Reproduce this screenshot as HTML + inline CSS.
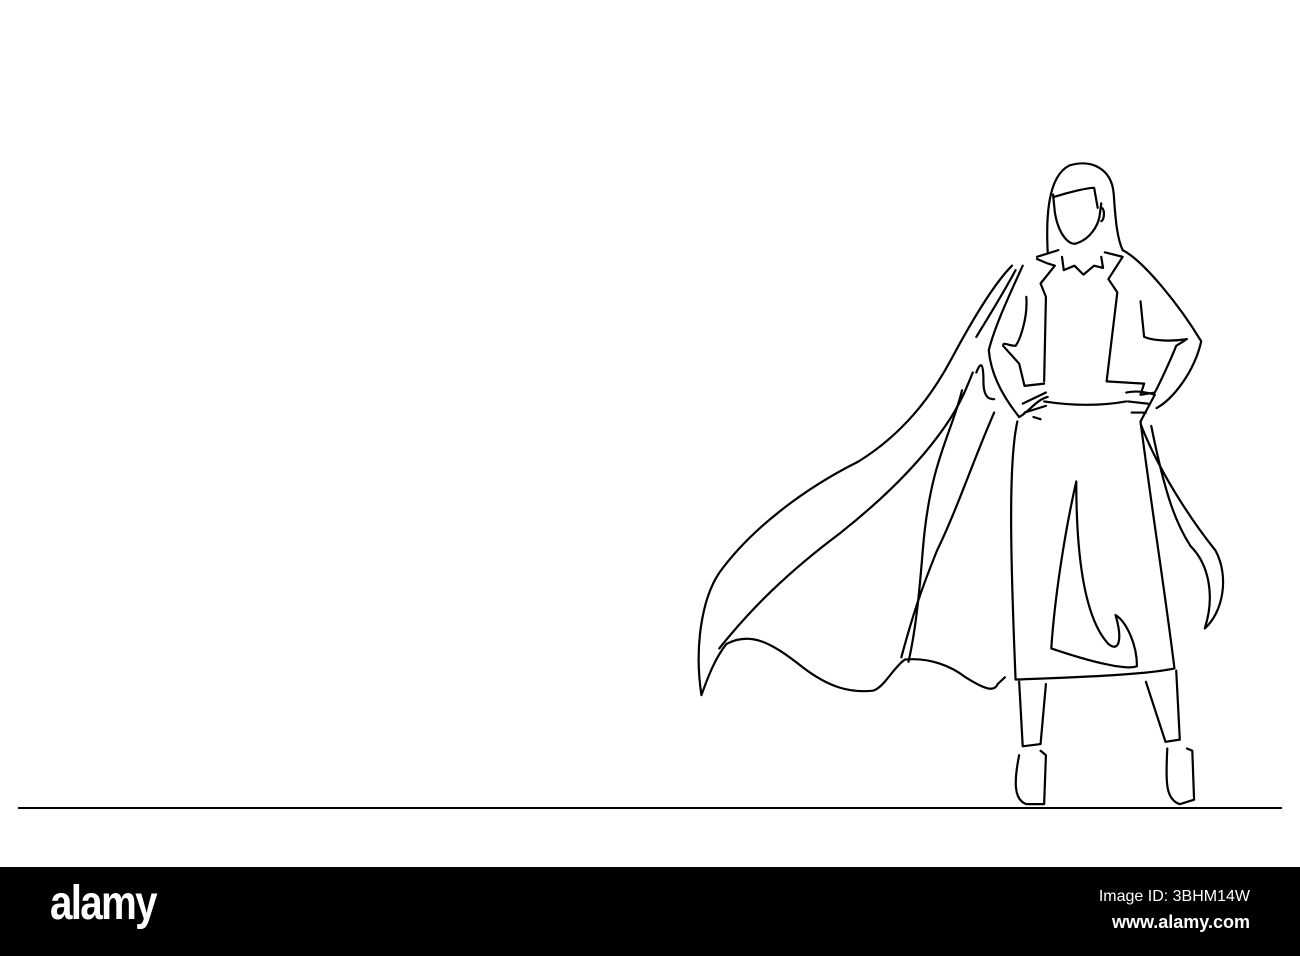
<!DOCTYPE html>
<html><head><style>
html,body{margin:0;padding:0;background:#fff;width:1300px;height:956px;overflow:hidden;position:relative;font-family:"Liberation Sans",sans-serif}
.band{position:absolute;left:0;top:867px;width:1300px;height:89px;background:#000}
.logo{position:absolute;left:50px;top:880px;line-height:48px;color:#fff;font-size:48px;font-weight:bold;letter-spacing:-2px;transform:scaleX(0.84);transform-origin:left top}
.id{position:absolute;right:50px;top:888px;line-height:18px;color:#fff;font-size:16px;white-space:nowrap}
.www{position:absolute;right:50px;top:912px;line-height:20px;color:#fff;font-size:18px;font-weight:bold;white-space:nowrap}
</style></head><body>
<svg width="1300" height="867" style="position:absolute;left:0;top:0">
<line x1="18" y1="808" x2="1282" y2="808" stroke="#000" stroke-width="2"/>
<g transform="translate(680,150) scale(0.357,0.445)" fill="none" stroke="#000" stroke-width="2.2" vector-effect="non-scaling-stroke" stroke-linecap="round" stroke-linejoin="round">
<path vector-effect="non-scaling-stroke" d="M1030,230 C1025,150 1030,60 1090,35 C1150,20 1210,40 1215,100 C1220,160 1225,200 1240,225"/>
<path vector-effect="non-scaling-stroke" d="M1045,100 L1050,140 C1060,190 1090,215 1110,210 C1150,200 1170,170 1175,150 L1180,120 M1050,105 C1090,95 1140,85 1160,85 L1170,130 M1180,130 c10,0 10,25 0,30"/>
<path vector-effect="non-scaling-stroke" d="M1000,245 L1030,255 L1050,260 L1010,300 L1025,330 L1020,520 M1190,230 L1240,240 L1200,290 L1225,320 L1195,520 L1300,525 M1000,240 L1060,225"/>
<path vector-effect="non-scaling-stroke" d="M1070,240 L1075,270 L1105,260 L1130,280 L1160,260 L1185,265 L1180,240"/>
<path vector-effect="non-scaling-stroke" d="M960,260 C920,330 880,400 865,450 C870,500 900,550 950,600 M970,330 C975,380 950,430 940,440 C920,440 905,430 905,440 L950,480 L965,530 L1020,525"/>
<path vector-effect="non-scaling-stroke" d="M950,600 C975,590 1000,560 1030,555 M960,570 L1025,545 M965,590 L1025,575 M990,600 L1010,605"/>
<path vector-effect="non-scaling-stroke" d="M1240,225 C1300,250 1400,350 1460,430 C1440,500 1380,560 1335,580 M1290,340 L1300,420 C1330,430 1380,430 1420,425 L1390,440 C1370,480 1340,530 1330,545 L1290,550 L1300,525"/>
<path vector-effect="non-scaling-stroke" d="M1250,545 C1280,540 1310,545 1330,550 L1290,610 M1255,565 L1310,570 M1265,590 L1305,590"/>
<path vector-effect="non-scaling-stroke" d="M1020,565 C1100,575 1180,575 1250,565"/>
<path vector-effect="non-scaling-stroke" d="M945,610 C920,700 925,900 940,1190 M1290,610 C1320,800 1360,1000 1385,1165 M940,1190 C1100,1185 1300,1180 1385,1165"/>
<path vector-effect="non-scaling-stroke" d="M1110,745 C1080,850 1050,1000 1040,1120 C1150,1150 1250,1170 1280,1160 C1280,1110 1250,1060 1220,1045 M1110,745 C1110,900 1130,1050 1200,1110 C1230,1130 1240,1100 1220,1045"/>
<path vector-effect="non-scaling-stroke" d="M950,1195 L960,1340 L1010,1335 L1025,1200 M950,1360 C935,1420 935,1460 970,1470 L1020,1470 L1025,1360 L1010,1350 M1305,1195 L1360,1330 L1400,1325 L1390,1170 M1365,1345 C1360,1420 1360,1460 1400,1470 L1440,1460 L1435,1350 L1420,1345"/>
<path vector-effect="non-scaling-stroke" d="M1290,615 C1340,720 1430,830 1500,900 C1540,960 1520,1040 1470,1075 C1500,1000 1480,930 1430,890 C1390,840 1360,780 1320,620"/>
<path vector-effect="non-scaling-stroke" d="M930,260 C880,300 820,380 760,470 C700,560 620,640 500,700 C350,760 200,850 110,950 C60,1010 40,1120 60,1225 C80,1180 100,1140 130,1110 C200,1080 260,1110 340,1160 C420,1210 480,1220 540,1215 C570,1210 600,1160 630,1145 C700,1140 760,1160 800,1185 C850,1210 880,1220 890,1200 L910,1185"/>
<path vector-effect="non-scaling-stroke" d="M940,270 C900,330 860,380 830,420 M110,1120 C200,1030 300,950 450,860 C560,790 680,700 760,600 C790,560 800,540 820,500"/>
<path vector-effect="non-scaling-stroke" d="M880,590 C820,700 780,800 720,900 C690,960 660,1020 620,1140 M790,540 C760,640 700,700 680,900 C670,1000 660,1080 640,1150 M830,500 C840,480 850,470 850,520 C850,560 870,560 880,560"/>
</g>
</svg>
<div class="band"></div>
<div class="logo">alamy</div>
<div class="id">Image ID: 3BHM14W</div>
<div class="www">www.alamy.com</div>
</body></html>
